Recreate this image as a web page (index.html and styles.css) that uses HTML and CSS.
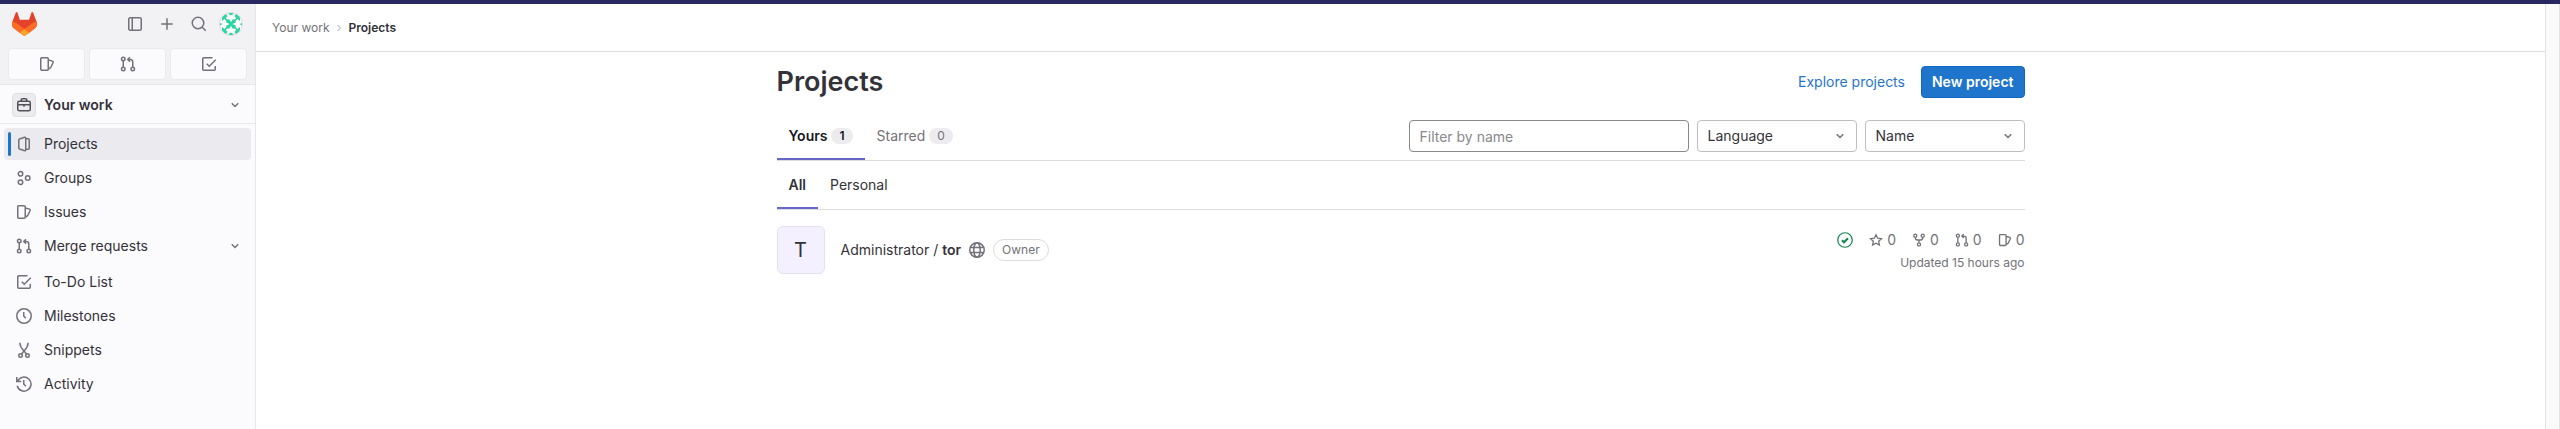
FILE: index.html
```html
<!DOCTYPE html>
<html lang="en">
<head>
<meta charset="utf-8">
<title>Projects · GitLab</title>
<link rel="stylesheet" href="styles.css">
</head>
<body>
<svg class="sprite" aria-hidden="true">
  <symbol id="chevron" viewBox="0 0 16 16"><path d="M4.750 6.250 8 9.500l3.250-3.250"/></symbol>
  <symbol id="issues" viewBox="0 0 16 16"><path d="M2.750 1.750h5.500a1 1 0 0 1 1 1v10.500a1 1 0 0 1-1 1h-5.500a1 1 0 0 1-1-1V2.750a1 1 0 0 1 1-1zM9.500 4l3.900 1.100c.6.2.9.8.7 1.400L11.600 11.700l-2.200 1.300"/></symbol>
  <symbol id="merge" viewBox="0 0 16 16"><circle cx="3.250" cy="3" r="1.750"/><circle cx="3.250" cy="13" r="1.750"/><circle cx="12.750" cy="13" r="1.750"/><path d="M3.250 4.750v6.500M12.750 11.250V6a2.500 2.500 0 0 0-2.500-2.500H8M10 1.250 7.750 3.500 10 5.750"/></symbol>
  <symbol id="todo" viewBox="0 0 16 16"><path d="M11.500 1.750H2.750a1 1 0 0 0-1 1v10.500a1 1 0 0 0 1 1h10.500a1 1 0 0 0 1-1V10M5.750 7.750l2.500 2.500 6.500-6.500"/></symbol>
  <symbol id="project" viewBox="0 0 16 16"><path d="m8.750 1.250-5.300 1.700a1 1 0 0 0-.7 1v8.100a1 1 0 0 0 .7 1l5.300 1.700a.8.8 0 0 0 1-.8V2.050a.8.8 0 0 0-1-.8zM9.750 2.750h2.500a1 1 0 0 1 1 1v8.500a1 1 0 0 1-1 1h-2.500"/></symbol>
  <symbol id="groups" viewBox="0 0 16 16"><circle cx="4.500" cy="3.800" r="2.250"/><circle cx="4.500" cy="12.200" r="2.250"/><circle cx="11.700" cy="8" r="2.250"/></symbol>
  <symbol id="clock" viewBox="0 0 16 16"><circle cx="8" cy="8" r="7.250"/><path d="M7.750 4v4l2 2.250"/></symbol>
  <symbol id="snippet" viewBox="0 0 16 16"><circle cx="4.500" cy="13.500" r="1.750"/><circle cx="11.500" cy="13.500" r="1.750"/><path d="M3.750.75C4 4 6 7 8 9l2.500 3M12.250.75C12 4 10 7 8 9l-2.500 3"/></symbol>
  <symbol id="history" viewBox="0 0 16 16"><path d="M1.750 5A7 7 0 1 1 1.200 9.750M.75 1v4.500h4.500M7.750 4v4l2 2.250"/></symbol>
  <symbol id="star" viewBox="0 0 16 16"><path d="m8 1.900 1.900 4 4.350.55-3.200 3 .85 4.300L8 11.600l-3.900 2.150.85-4.300-3.200-3 4.350-.55z"/></symbol>
  <symbol id="fork" viewBox="0 0 16 16"><circle cx="3.750" cy="3" r="1.750"/><circle cx="12.250" cy="3" r="1.750"/><circle cx="8" cy="13" r="1.750"/><path d="M3.750 4.750V5.500a2.500 2.500 0 0 0 2.500 2.500h3.500a2.500 2.500 0 0 0 2.500-2.500v-.75M8 8v3.250"/></symbol>
  <symbol id="earth" viewBox="0 0 16 16"><circle cx="8" cy="8" r="7.250"/><ellipse cx="8" cy="8" rx="3.250" ry="7.250"/><path d="M1.500 5.500h13M1.500 10.500h13"/></symbol>
</svg>

<div class="brand-bar"></div>
<div class="layout">
  <aside class="sidebar">
    <div class="user-bar">
      <div class="user-row">
        <a class="logo" href="#" aria-label="Homepage">
          <svg viewBox="0 0 25 24"><path fill="#e24329" d="m24.500 9.500-.03-.09L21.080.56a.9.9 0 0 0-1.690.1l-2.290 7.010H7.830L5.540.65a.9.9 0 0 0-1.690-.1L.46 9.400l-.04.1a6.300 6.300 0 0 0 2.090 7.280l.01.01 5.200 3.880 4.740 3.330 4.730-3.330 5.220-3.900A6.300 6.300 0 0 0 24.500 9.500z"/><path fill="#fc6d26" d="m24.500 9.500-.03-.09a11.440 11.440 0 0 0-4.560 2.050l-7.450 5.630 4.730 3.580 5.220-3.900A6.300 6.300 0 0 0 24.500 9.500zM.42 9.500l.04-.1a11.440 11.440 0 0 1 4.550 2.060l7.450 5.630-4.740 3.580-5.210-3.890A6.300 6.300 0 0 1 .42 9.500z"/><path fill="#fca326" d="m7.720 20.670 4.740 3.330 4.730-3.330-4.730-3.580z"/></svg>
        </a>
        <button class="tool" aria-label="Collapse sidebar"><svg class="icon" viewBox="0 0 16 16"><rect x="1.750" y="1.750" width="12.500" height="12.500" rx="1.500"/><path d="M5.250 2v12"/></svg></button>
        <button class="tool" aria-label="Create new"><svg class="icon" viewBox="0 0 16 16"><path d="M8 2.250v11.500M2.250 8h11.500"/></svg></button>
        <button class="tool" aria-label="Search"><svg class="icon" viewBox="0 0 16 16"><circle cx="7" cy="7" r="5.750"/><path d="m11.250 11.250 3.500 3.500"/></svg></button>
        <button class="tool" aria-label="User menu">
          <svg class="identicon" viewBox="0 0 24 24"><clipPath id="round"><circle cx="12" cy="12" r="11"/></clipPath><circle cx="12" cy="12" r="11.500" fill="#fff" stroke="#dcdcde"/><g clip-path="url(#round)" fill="#2bd4a0"><path d="M9.500 1h5v1L12 3.500 9.500 2zM9.500 23h5v-1L12 20.500 9.500 22zM4 3l3-1.500 1.500 3L6 6.500 3 9V5zM20 3l-3-1.500-1.500 3 2.500 2L21 9V5zM4 21l3 1.500 1.500-3L6 17.500 3 15v4zM20 21l-3 1.500-1.500-3 2.500-2 3-2.500v4zM1 11l2.500 1L1 13.500zM23 11l-2.500 1 2.500 1.500z"/><circle cx="9.200" cy="9.200" r="2"/><circle cx="14.800" cy="9.200" r="2"/><circle cx="9.200" cy="14.800" r="2"/><circle cx="14.800" cy="14.800" r="2"/><path d="M9 9h1.500l1.500.7 1.500-.7H15l-.7 3 .7 3h-1.500l-1.500-.7-1.500.7H9l.7-3zM6.500 5.500l2 2.500-1 1L5.500 7zM17.500 5.500l-2 2.500 1 1 2-2zM6.500 18.500l2-2.500-1-1-2 2zM17.500 18.500l-2-2.500 1-1 2 2z"/></g></svg>
        </button>
      </div>
      <div class="counters">
        <a href="#" aria-label="Issues"><svg class="icon"><use href="#issues"/></svg></a>
        <a href="#" aria-label="Merge requests"><svg class="icon"><use href="#merge"/></svg></a>
        <a href="#" aria-label="To-Do List"><svg class="icon"><use href="#todo"/></svg></a>
      </div>
    </div>
    <button class="context">
      <span class="context-icon"><svg class="icon" viewBox="0 0 16 16"><rect x="1.750" y="4.250" width="12.500" height="9.500" rx="1.500"/><path d="M5.250 4V2.750a1 1 0 0 1 1-1h3.500a1 1 0 0 1 1 1V4M2 7.750h12M8 7.750v2"/></svg></span>
      <span class="grow">Your work</span>
      <svg class="icon"><use href="#chevron"/></svg>
    </button>
    <nav class="menu">
      <a class="active" href="#"><svg class="icon"><use href="#project"/></svg><span>Projects</span></a>
      <a href="#"><svg class="icon"><use href="#groups"/></svg><span>Groups</span></a>
      <a href="#"><svg class="icon"><use href="#issues"/></svg><span>Issues</span></a>
      <button class="group"><svg class="icon"><use href="#merge"/></svg><span class="grow">Merge requests</span><svg class="icon"><use href="#chevron"/></svg></button>
      <a href="#"><svg class="icon"><use href="#todo"/></svg><span>To-Do List</span></a>
      <a href="#"><svg class="icon"><use href="#clock"/></svg><span>Milestones</span></a>
      <a href="#"><svg class="icon"><use href="#snippet"/></svg><span>Snippets</span></a>
      <a href="#"><svg class="icon"><use href="#history"/></svg><span>Activity</span></a>
    </nav>
  </aside>

  <div class="page">
    <nav class="breadcrumbs" aria-label="Breadcrumbs">
      <a href="#">Your work</a>
      <svg class="separator" viewBox="0 0 8 8"><path d="m2.500 1 3 3-3 3"/></svg>
      <a class="current" href="#">Projects</a>
    </nav>
    <main class="content">
      <header class="title-row">
        <h1>Projects</h1>
        <a class="link" href="#">Explore projects</a>
        <a class="primary" href="#">New project</a>
      </header>
      <div class="tab-row">
        <a class="tab selected" href="#">Yours <span class="count">1</span></a>
        <a class="tab muted" href="#">Starred <span class="count">0</span></a>
        <form class="filters">
          <input type="search" placeholder="Filter by name" aria-label="Filter by name">
          <label class="dropdown"><select aria-label="Language"><option>Language</option></select><svg class="icon"><use href="#chevron"/></svg></label>
          <label class="dropdown"><select aria-label="Sort by"><option>Name</option></select><svg class="icon"><use href="#chevron"/></svg></label>
        </form>
      </div>
      <div class="tab-row">
        <a class="tab selected sub" href="#">All</a>
        <a class="tab" href="#">Personal</a>
      </div>
      <article class="project">
        <a class="avatar" href="#">T</a>
        <h2><a href="#">Administrator / <b>tor</b></a></h2>
        <svg class="icon"><use href="#earth"/></svg>
        <span class="role">Owner</span>
        <div class="meta">
          <div class="stats">
            <a class="status" href="#" aria-label="Pipeline: passed"><svg class="icon" viewBox="0 0 16 16"><circle cx="8" cy="8" r="7.250"/><path class="tick" d="m5 8.250 2 2 4-4"/></svg></a>
            <a href="#"><svg class="small"><use href="#star"/></svg>0</a>
            <a href="#"><svg class="small"><use href="#fork"/></svg>0</a>
            <a href="#"><svg class="small"><use href="#merge"/></svg>0</a>
            <a href="#"><svg class="small"><use href="#issues"/></svg>0</a>
          </div>
          <div class="updated">Updated 15 hours ago</div>
        </div>
      </article>
    </main>
  </div>
  <div class="gutter"></div>
</div>
</body>
</html>
```

FILE: styles.css
```css
* { box-sizing: border-box; }
body {
  margin: 0;
  min-height: 100vh;
  display: flex;
  flex-direction: column;
  background: #fff;
  color: #333238;
  font: 14px/20px Inter, "Noto Sans", sans-serif;
}
a { color: inherit; text-decoration: none; }
button, input, select { font: inherit; color: inherit; }
button { border: 0; padding: 0; background: none; text-align: left; cursor: pointer; }
.sprite { position: absolute; width: 0; height: 0; }
.icon, .small, .separator {
  flex: none;
  width: 16px;
  height: 16px;
  fill: none;
  stroke: #737278;
  stroke-width: 1.5;
}
.small { width: 14px; height: 14px; }
.grow { flex: 1; }

.brand-bar { height: 4px; background: #292961; }
.layout { flex: 1; display: flex; }

.sidebar {
  flex: none;
  width: 256px;
  background: #fbfafd;
  border-right: 1px solid #e7e6ea;
}
.user-bar { background: #f2f1f4; padding-bottom: 4px; border-bottom: 1px solid #e7e6ea; }
.user-row { display: flex; align-items: center; height: 40px; padding: 0 8px 0 12px; }
.logo { display: flex; margin-right: auto; }
.logo svg { width: 25px; height: 24px; }
.tool { display: flex; align-items: center; justify-content: center; width: 32px; height: 32px; }
.identicon { width: 24px; height: 24px; }
.counters { display: flex; gap: 4px; padding: 4px 8px 0; }
.counters a {
  flex: 1;
  display: flex;
  align-items: center;
  justify-content: center;
  height: 32px;
  background: #fbfafd;
  border: 1px solid #eae9ed;
  border-radius: 4px;
}
.context {
  display: flex;
  align-items: center;
  gap: 8px;
  width: 100%;
  height: 39px;
  padding: 1px 12px 0;
  border-bottom: 1px solid #e7e6ea;
  font-weight: 600;
}
.context-icon {
  display: flex;
  align-items: center;
  justify-content: center;
  width: 24px;
  height: 24px;
  background: #ececef;
  border: 1px solid #dfdee2;
  border-radius: 4px;
}
.context-icon .icon { stroke: #535158; }
.menu { display: flex; flex-direction: column; gap: 2px; padding: 4px; }
.menu a, .menu button {
  display: flex;
  align-items: center;
  gap: 12px;
  height: 32px;
  padding: 0 8px 0 12px;
  border-radius: 4px;
}
.menu .group { margin-bottom: 2px; }
.menu .active { background: #ebeaef; padding-left: 4px; gap: 5px; }
.menu .active::before { content: ""; width: 3px; height: 24px; border-radius: 2px; background: #1f75cb; }
.menu .active span { margin-left: 7px; }

.page { flex: 1; min-width: 0; }
.gutter {
  flex: none;
  width: 15px;
  background: #fafafa;
  border: solid #e4e4e4;
  border-width: 0 1px;
}
.breadcrumbs {
  display: flex;
  align-items: center;
  height: 48px;
  padding: 0 16px;
  border-bottom: 1px solid #dcdcde;
  font-size: 12px;
  color: #737278;
}
.separator { width: 8px; height: 8px; margin: 0 6px 0 5px; stroke: #a4a3a8; stroke-width: 1; }
.current { color: #333238; font-weight: 600; }
.content { max-width: 1280px; margin: 0 auto; padding: 14px 16px; }
.title-row { display: flex; align-items: center; height: 32px; }
h1 { margin: 0 auto 0 0; font-size: 27px; line-height: 32px; font-weight: 600; }
.link { color: #1f75cb; margin-right: 16px; }
.primary {
  padding: 5px 10px;
  color: #fff;
  font-weight: 600;
  background: #1f75cb;
  border: 1px solid #1068bf;
  border-radius: 4px;
}
.title-row + .tab-row { height: 63px; padding-top: 14px; }
.tab-row { display: flex; align-items: stretch; height: 49px; border-bottom: 1px solid #dcdcde; }
.tab { display: flex; align-items: center; gap: 4px; padding: 0 12px; }
.selected { font-weight: 600; color: #18171d; box-shadow: inset 0 -2px #6666c4; }
.sub { color: #333238; }
.muted { color: #737278; }
.count { padding: 0 8px; border-radius: 8px; background: #ececef; font-size: 12px; line-height: 16px; }
.filters { display: flex; align-items: center; gap: 8px; margin-left: auto; }
.filters input {
  width: 280px;
  height: 32px;
  padding: 0 10px;
  border: 1px solid #89888d;
  border-radius: 4px;
  background: #fff;
}
.filters input::placeholder { color: #89888d; opacity: 1; }
.dropdown { position: relative; display: flex; width: 160px; }
.dropdown select {
  appearance: none;
  width: 100%;
  height: 32px;
  padding: 0 32px 0 10px;
  border: 1px solid #bfbfc3;
  border-radius: 4px;
  background: #fff;
}
.dropdown .icon { position: absolute; right: 9px; top: 8px; pointer-events: none; }

.project { display: flex; align-items: center; padding: 16px 0; }
.avatar {
  display: flex;
  align-items: center;
  justify-content: center;
  width: 48px;
  height: 48px;
  margin-right: 16px;
  background: #f4f0ff;
  border: 1px solid #e4e0ef;
  border-radius: 6px;
  font-size: 20px;
}
h2 { margin: 0 8px 0 0; font-size: 14px; font-weight: 400; }
h2 b { font-weight: 600; }
.role {
  margin-left: 8px;
  padding: 0 8px;
  border: 1px solid #dcdcde;
  border-radius: 11px;
  color: #737278;
  font-size: 12px;
}
.meta { margin-left: auto; padding-top: 2px; color: #737278; }
.stats { display: flex; justify-content: flex-end; align-items: center; height: 24px; gap: 16px; }
.stats a { display: flex; align-items: center; gap: 4px; }
.status .icon { stroke: #108548; stroke-width: 1.2; }
.status .tick { stroke-width: 2; }
.updated { font-size: 12px; line-height: 22px; text-align: right; }
```
